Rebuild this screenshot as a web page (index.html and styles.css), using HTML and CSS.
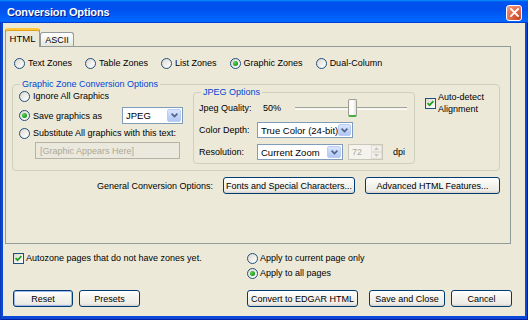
FILE: index.html
```html
<!DOCTYPE html>
<html>
<head>
<meta charset="utf-8">
<link rel="stylesheet" href="styles.css">
</head>
<body>
<div class="window">
  <div class="titlebar">
    <span class="title">Conversion Options</span>
    <span class="close"><svg width="9" height="9" viewBox="0 0 9 9"><path d="M1 1L8 8M8 1L1 8" stroke="#fff" stroke-width="1.8" stroke-linecap="square"/></svg></span>
  </div>
  <div class="frame">
    <div class="client">
      <div class="tabs">
        <div class="tab active">HTML</div>
        <div class="tab">ASCII</div>
      </div>
      <div class="panel">
        <div class="zone-row">
          <span class="opt"><span class="radio"></span>Text Zones</span>
          <span class="opt"><span class="radio"></span>Table Zones</span>
          <span class="opt"><span class="radio"></span>List Zones</span>
          <span class="opt"><span class="radio on"></span>Graphic Zones</span>
          <span class="opt"><span class="radio"></span>Dual-Column</span>
        </div>
        <div class="group gz">
          <div class="group-title">Graphic Zone Conversion Options</div>
          <div class="gz-body">
            <div class="gz-left">
              <span class="opt row-ignore"><span class="radio"></span>Ignore All Graphics</span>
              <div class="row-save">
                <span class="opt save-label"><span class="radio on"></span>Save graphics as</span>
                <div class="select sel-jpeg"><span class="sel-text">JPEG</span><span class="arrow"><svg width="7" height="5" viewBox="0 0 7 5"><path d="M0.6 0.6L3.5 3.5L6.4 0.6" stroke="#4D6185" stroke-width="1.6" fill="none"/></svg></span></div>
              </div>
              <span class="opt row-sub"><span class="radio"></span>Substitute All graphics with this text:</span>
              <div class="textbox">[Graphic Appears Here]</div>
            </div>
            <div class="group jpeg">
              <div class="group-title jt">JPEG Options</div>
              <div class="jrow jrow1">
                <span class="jlabel">Jpeg Quality:</span>
                <span class="pct">50%</span>
                <div class="slider"><span class="thumb"></span></div>
              </div>
              <div class="jrow jrow2">
                <span class="jlabel">Color Depth:</span>
                <div class="select sel-color"><span class="sel-text">True Color (24-bit)</span><span class="arrow"><svg width="7" height="5" viewBox="0 0 7 5"><path d="M0.6 0.6L3.5 3.5L6.4 0.6" stroke="#4D6185" stroke-width="1.6" fill="none"/></svg></span></div>
              </div>
              <div class="jrow jrow3">
                <span class="jlabel">Resolution:</span>
                <div class="select sel-res"><span class="sel-text">Current Zoom</span><span class="arrow"><svg width="7" height="5" viewBox="0 0 7 5"><path d="M0.6 0.6L3.5 3.5L6.4 0.6" stroke="#4D6185" stroke-width="1.6" fill="none"/></svg></span></div>
                <div class="spinner"><span class="spin-text">72</span><span class="spin-btns"><span class="spin-btn"><svg width="5" height="3" viewBox="0 0 5 3"><path d="M0 3L2.5 0L5 3Z" fill="#C9C7BA"/></svg></span><span class="spin-btn"><svg width="5" height="3" viewBox="0 0 5 3"><path d="M0 0L2.5 3L5 0Z" fill="#C9C7BA"/></svg></span></span></div>
                <span class="dpi">dpi</span>
              </div>
            </div>
            <div class="auto">
              <span class="cb"><svg width="7" height="7" viewBox="0 0 7 7"><path d="M0.6 3.2L2.6 5.2L6.4 1.2" stroke="#21A121" stroke-width="1.7" fill="none"/></svg></span>
              <span class="auto-text">Auto-detect<br>Alignment</span>
            </div>
          </div>
        </div>
        <div class="general-row">
          <span>General Conversion Options:</span>
          <span class="btn w-fonts">Fonts and Special Characters...</span>
          <span class="btn w-adv">Advanced HTML Features...</span>
        </div>
      </div>
      <div class="bottom">
        <div class="b-left">
          <span class="opt autozone"><span class="cb"><svg width="7" height="7" viewBox="0 0 7 7"><path d="M0.6 3.2L2.6 5.2L6.4 1.2" stroke="#21A121" stroke-width="1.7" fill="none"/></svg></span>Autozone pages that do not have zones yet.</span>
        </div>
        <div class="b-right">
          <span class="opt apply"><span class="radio"></span>Apply to current page only</span>
          <span class="opt apply"><span class="radio on"></span>Apply to all pages</span>
        </div>
        <div class="b-left btn-row">
          <span class="btn default w-reset">Reset</span>
          <span class="btn w-presets">Presets</span>
        </div>
        <div class="b-right btn-row">
          <span class="btn w-convert">Convert to EDGAR HTML</span>
          <span class="btn w-save">Save and Close</span>
          <span class="btn w-cancel">Cancel</span>
        </div>
      </div>
    </div>
  </div>
</div>
</body>
</html>
```

FILE: styles.css
```css
html, body {
  margin: 0;
  padding: 0;
}
body {
  width: 528px;
  height: 320px;
  overflow: hidden;
  font-family: "Liberation Sans", Arial, sans-serif;
  font-size: 9px;
  color: #000;
}
.window {
  width: 528px;
  height: 320px;
  display: flex;
  flex-direction: column;
}
.titlebar {
  height: 23px;
  flex: 0 0 23px;
  background: linear-gradient(180deg, #0997ff 0%, #0053ee 8%, #0050ee 40%, #0066ff 88%, #0066ff 93%, #005bff 95%, #003dd7 96%, #003dd7 100%);
  display: flex;
  align-items: center;
  justify-content: space-between;
  padding: 0 6px 0 7px;
  box-sizing: border-box;
}
.title {
  color: #fff;
  font-weight: bold;
  font-size: 11px;
  letter-spacing: -0.15px;
  text-shadow: 1px 1px 0 #0a1883;
}
.close {
  width: 16px;
  height: 16px;
  box-sizing: border-box;
  border: 1px solid #fff;
  border-radius: 3px;
  background: radial-gradient(circle at 80% 85%, #cc4628 0%, #dc6542 40%, #e88064 70%, #f0a892 100%);
  display: flex;
  align-items: center;
  justify-content: center;
  margin-top: 2px;
}
.frame {
  flex: 1;
  background: #0847d8;
  padding: 0 3px 4px 3px;
  display: flex;
  box-shadow: inset 1px 0 0 #0a3bb8, inset -1px 0 0 #001ea0, inset 0 -1px 0 #001ea0;
}
.client {
  flex: 1;
  background: #ece9d8;
  display: flex;
  flex-direction: column;
}
.tabs {
  display: flex;
  align-items: flex-end;
  height: 18px;
  margin: 5px 0 0 2px;
}
.tab {
  box-sizing: border-box;
  height: 14px;
  width: 34px;
  border: 1px solid #919b9c;
  border-bottom: none;
  border-radius: 3px 3px 0 0;
  background: linear-gradient(180deg, #fff 0%, #f3f2ec 60%, #e6e4d8 100%);
  display: flex;
  align-items: center;
  justify-content: center;
  font-size: 9px;
}
.tab.active {
  height: 19px;
  width: 35px;
  margin-bottom: -1px;
  background: #ece9d8;
  border-top: 2px solid #ffc83c;
  position: relative;
  z-index: 1;
  box-shadow: inset 0 1px 0 #e6a114;
  font-size: 9.5px;
}
.panel {
  box-sizing: border-box;
  width: 506px;
  height: 198px;
  margin-left: 2px;
  border: 1px solid #919b9c;
  background: #ece9d8;
  display: flex;
  flex-direction: column;
}
.opt {
  display: flex;
  align-items: center;
  gap: 3px;
  white-space: nowrap;
  height: 12px;
}
.radio {
  width: 11px;
  height: 11px;
  flex: 0 0 11px;
  box-sizing: border-box;
  border: 1px solid #1c5180;
  border-radius: 50%;
  background: linear-gradient(135deg, #dcd7cb 0%, #f3f2ee 60%, #fff 100%);
  display: flex;
  align-items: center;
  justify-content: center;
}
.radio.on::after {
  content: "";
  width: 5px;
  height: 5px;
  border-radius: 50%;
  background: radial-gradient(circle at 35% 35%, #5ed65a 0%, #21a121 60%, #17801a 100%);
}
.cb {
  width: 11px;
  height: 11px;
  flex: 0 0 11px;
  box-sizing: border-box;
  border: 1px solid #1c5180;
  background: linear-gradient(135deg, #dcd7cb 0%, #f3f2ee 60%, #fff 100%);
  display: flex;
  align-items: center;
  justify-content: center;
}
.zone-row {
  display: flex;
  gap: 13px;
  margin: 10px 0 0 8px;
  height: 12px;
}
.group {
  box-sizing: border-box;
  border: 1px solid #d0d0bf;
  border-radius: 4px;
}
.group-title {
  color: #0046d5;
  background: #ece9d8;
  line-height: 12px;
  height: 12px;
  margin: -7px 0 0 7px;
  padding: 0 2px;
  width: max-content;
}
.gz {
  height: 87px;
  margin: 15px 10px 0 6px;
}
.gz-body {
  display: flex;
  align-items: flex-start;
  padding-left: 6px;
}
.gz-left {
  width: 164px;
  display: flex;
  flex-direction: column;
}
.row-save {
  display: flex;
  align-items: center;
  margin-top: 5px;
  height: 17px;
}
.save-label {
  width: 103px;
}
.row-sub {
  margin-top: 3px;
}
.textbox {
  box-sizing: border-box;
  margin: 3px 0 0 16px;
  width: 145px;
  height: 17px;
  border: 1px solid #b5b2a6;
  background: #ebe9dd;
  color: #aca899;
  padding-left: 4px;
  display: flex;
  align-items: center;
}
.select {
  box-sizing: border-box;
  height: 16px;
  border: 1px solid #7f9db9;
  background: #fff;
  display: flex;
  align-items: center;
  padding: 0 1px 0 3px;
}
.sel-text {
  flex: 1;
  white-space: nowrap;
  font-size: 9.5px;
}
.arrow {
  box-sizing: border-box;
  width: 14px;
  height: 12px;
  border: 1px solid #b9cdf7;
  border-radius: 2px;
  background: linear-gradient(180deg, #dbe6fd 0%, #c3d4fb 50%, #b2c6f4 100%);
  display: flex;
  align-items: center;
  justify-content: center;
}
.sel-jpeg {
  width: 61px;
  height: 17px;
}
.sel-jpeg .arrow {
  height: 13px;
}
.sel-color {
  width: 96px;
}
.sel-res {
  width: 86px;
}
.jpeg {
  width: 222px;
  height: 72px;
  margin: 2px 0 0 10px;
  padding: 0 7px 0 5px;
}
.jt {
  margin-left: 2px;
}
.jrow {
  display: flex;
  align-items: center;
}
.jrow1 {
  height: 18px;
  margin-top: 1px;
}
.jrow2 {
  margin-top: 5px;
  height: 16px;
}
.jrow3 {
  margin-top: 6px;
  height: 16px;
}
.jlabel {
  width: 58px;
  flex: 0 0 58px;
}
.pct {
  width: 32px;
  margin-left: 6px;
}
.slider {
  width: 112px;
  height: 18px;
  display: flex;
  align-items: center;
  background: linear-gradient(180deg, transparent 0, transparent 8px, #a5a49a 8px, #a5a49a 9px, #f0efe8 9px, #fff 11px, transparent 11px);
}
.thumb {
  box-sizing: border-box;
  width: 9px;
  height: 18px;
  margin-left: 53px;
  border: 1px solid #9e9c90;
  border-radius: 2px;
  border-bottom: 2px solid #3fb040;
  background: linear-gradient(90deg, #f7f7f4 0%, #fff 50%, #e5e3da 100%);
}
.spinner {
  box-sizing: border-box;
  width: 35px;
  height: 16px;
  margin-left: 5px;
  border: 1px solid #c9c7ba;
  background: #f4f3ee;
  display: flex;
  align-items: center;
  color: #aca899;
  padding-left: 3px;
}
.spin-text {
  flex: 1;
}
.spin-btns {
  display: flex;
  flex-direction: column;
  height: 14px;
  width: 11px;
}
.spin-btn {
  flex: 1;
  display: flex;
  align-items: center;
  justify-content: center;
  background: #f1f0ea;
  border: 1px solid #e2e0d6;
  box-sizing: border-box;
}
.dpi {
  margin-left: 10px;
}
.auto {
  display: flex;
  align-items: center;
  gap: 2px;
  margin: 1px 0 0 10px;
}
.auto-text {
  line-height: 12px;
}
.general-row {
  display: flex;
  justify-content: flex-end;
  align-items: center;
  gap: 10px;
  margin-top: 6px;
  padding-right: 10px;
  height: 17px;
}
.btn {
  box-sizing: border-box;
  height: 17px;
  border: 1px solid #003c74;
  border-radius: 3px;
  background: linear-gradient(180deg, #ffffff 0%, #f5f4ef 40%, #ecebe6 85%, #d6d0c5 100%);
  display: flex;
  align-items: center;
  justify-content: center;
  white-space: nowrap;
  font-size: 9px;
}
.btn.default {
  box-shadow: inset 0 0 0 1px #9db7ef;
}
.w-fonts { width: 132px; }
.w-adv { width: 135px; }
.w-reset { width: 60px; }
.w-presets { width: 61px; }
.w-convert { width: 111px; }
.w-save { width: 76px; }
.w-cancel { width: 61px; }
.bottom {
  display: grid;
  grid-template-columns: 234px 1fr;
  padding-left: 10px;
  margin-top: 8px;
  row-gap: 11px;
}
.b-left, .b-right {
  display: flex;
  flex-direction: column;
}
.autozone {
  gap: 2px;
}
.apply {
  gap: 2px;
}
.apply + .apply {
  margin-top: 3px;
}
.btn-row {
  flex-direction: row;
  gap: 6px;
}
.w-convert {
  margin-right: 5px;
}
```
